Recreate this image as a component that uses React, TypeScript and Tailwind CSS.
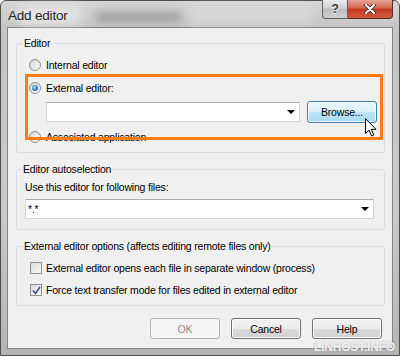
import React from 'react';

const Radio: React.FC<{ checked?: boolean }> = ({ checked }) => (
    <span className="w-[12px] h-[12px] rounded-full border border-[#8e8f8f] bg-[linear-gradient(135deg,#d4d4d4,#f9f9f9)] flex items-center justify-center shrink-0">
        {checked && <span className="w-[6px] h-[6px] rounded-full bg-[radial-gradient(circle_at_40%_35%,#9ddcff,#1b63a8_75%)]" />}
    </span>
);

const Check: React.FC<{ checked?: boolean }> = ({ checked }) => (
    <span className="w-[12px] h-[12px] border border-[#8e8f8f] bg-[linear-gradient(135deg,#d8d8d8,#fbfbfb)] flex items-center justify-center shrink-0">
        {checked && (
            <svg width="9" height="9" viewBox="0 0 9 9">
                <path d="M1 4.5 L3.5 7.5 L8 1" fill="none" stroke="#3d5183" strokeWidth="1.6" />
            </svg>
        )}
    </span>
);

const Arrow = () => <span className="w-0 h-0 border-l-[4px] border-r-[4px] border-t-[4px] border-l-transparent border-r-transparent border-t-black" />;

const DlgButton: React.FC<{ children: React.ReactNode, disabled?: boolean }> = ({ children, disabled }) => (
    <button
        className={disabled
            ? 'w-[70px] h-[21px] rounded-[3px] border border-[#b5b8ba] bg-[#f4f4f4] text-[#8b8b8b]'
            : 'w-[70px] h-[21px] rounded-[3px] border border-[#707070] bg-[linear-gradient(#f2f2f2,#ebebeb_50%,#dddddd_50%,#cfcfcf)] text-black shadow-[inset_0_0_0_1px_#fcfcfc]'}
    >
        {children}
    </button>
);

const Cursor = () => (
    <svg width="13" height="19" viewBox="0 0 13 19" className="absolute left-[365px] top-[118px]">
        <path d="M0.5 0.5 L0.5 15.5 L4 12.2 L6.6 18 L8.8 17 L6.3 11.3 L11 11.3 Z" fill="#fff" stroke="#000" strokeWidth="1" />
    </svg>
);

export default function App() {
    return (
        <div className="w-[400px] h-[356px] bg-white relative overflow-hidden font-['Liberation_Sans',sans-serif] text-[10.5px] tracking-[-0.2px] leading-[14px] text-black">
            {/* window frame */}
            <div className="relative w-[400px] h-[356px] rounded-t-[6px] border border-[#4e4e4e] bg-[linear-gradient(180deg,#d6d6d6,#c4c4c4_8%,#c9c9c9_60%,#b4b4b4)] pt-[26px] px-[6px] pb-[6px]">
                {/* glass blur behind title */}
                <div className="absolute left-[95px] top-[11px] w-[85px] h-[10px] bg-[#8c8c8c] blur-[4px] opacity-70" />
                <div className="absolute left-[190px] top-[6px] w-[120px] h-[16px] bg-[#dedede] blur-[6px] opacity-70" />
                <div className="absolute left-[20px] top-[4px] w-[60px] h-[20px] bg-[#e8e8e8] blur-[6px] opacity-80" />

                {/* title */}
                <div className="absolute left-[7px] top-[7px] text-[13.5px] tracking-[-0.2px] leading-[16px] text-[#1d1d1d] [text-shadow:0_0_6px_#fff]">Add editor</div>

                {/* caption buttons */}
                <div className="absolute right-[6px] top-[-1px] flex">
                    <div className="w-[26px] h-[19px] rounded-bl-[4px] border border-[#5f5f5f] border-t-0 bg-[linear-gradient(#eaeaea,#d2d2d2_45%,#bcbcbc_50%,#d0d0d0)] flex items-center justify-center text-[12px] font-bold text-[#3a3a3a] [text-shadow:0_1px_0_#fff]">?</div>
                    <div className="w-[45px] h-[19px] rounded-br-[4px] border border-l-0 border-[#5a2a22] border-t-0 bg-[linear-gradient(#e8a596,#d2664f_45%,#c2381f_50%,#d35a3f)] flex items-center justify-center">
                        <svg width="12" height="10" viewBox="0 0 12 10">
                            <path d="M2 1 L10 9 M10 1 L2 9" stroke="#3b1a14" strokeWidth="3.6" strokeLinecap="round" />
                            <path d="M2 1 L10 9 M10 1 L2 9" stroke="#fff" strokeWidth="2.2" strokeLinecap="round" />
                        </svg>
                    </div>
                </div>

                {/* client area */}
                <div className="h-full border border-[#848484] bg-[#f0f0f0] pl-[8px] pr-[7px] flex flex-col">
                    <fieldset className="mt-[9px] border border-[#d5dfe5] rounded-[3px] pb-[8px]">
                        <legend className="ml-[6px] px-[1px] leading-[12px]">Editor</legend>
                        <div className="pl-[12px] pr-[7px]">
                            <div className="mt-[9px] flex items-center gap-[5px] h-[14px]">
                                <Radio />
                                <span>Internal editor</span>
                            </div>
                            <div className="relative">
                                <div className="mt-[9px] flex items-center gap-[5px] h-[14px]">
                                    <Radio checked />
                                    <span>External editor:</span>
                                </div>
                                <div className="mt-[6px] flex items-center h-[22px] pl-[17px] gap-[7px]">
                                    <div className="w-[254px] h-[20px] bg-white border border-[#d0d3d8] border-t-[#abadb3] flex items-center justify-end pr-[4px]">
                                        <Arrow />
                                    </div>
                                    <button className="w-[70px] h-[22px] rounded-[3px] border border-[#3c7fb1] bg-[linear-gradient(#eaf6fd,#d9f0fc_50%,#bee6fd_50%,#a7d9f5)] shadow-[inset_0_0_0_1px_#f4fbff]">Browse...</button>
                                </div>
                                <div className="mt-[7px] flex items-center gap-[5px] h-[14px]">
                                    <Radio />
                                    <span>Associated application</span>
                                </div>
                                <div className="absolute left-[-4px] right-[-6px] top-[-7px] bottom-[4px] border-[3px] border-[#fb7d12]" />
                            </div>
                        </div>
                    </fieldset>

                    <fieldset className="mt-[10px] border border-[#d5dfe5] rounded-[3px] pb-[10px]">
                        <legend className="ml-[5px] px-[1px] leading-[12px]">Editor autoselection</legend>
                        <div className="pl-[8px] pr-[10px]">
                            <div className="mt-[5px] h-[14px]">Use this editor for following files:</div>
                            <div className="mt-[5px] h-[20px] bg-white border border-[#d0d3d8] border-t-[#abadb3] flex items-center justify-between pl-[2px] pr-[4px]">
                                <span>*.*</span>
                                <Arrow />
                            </div>
                        </div>
                    </fieldset>

                    <fieldset className="mt-[10px] border border-[#d5dfe5] rounded-[3px] pb-[8px]">
                        <legend className="ml-[6px] px-[1px] leading-[12px]">External editor options (affects editing remote files only)</legend>
                        <div className="pl-[13px] pr-[8px]">
                            <div className="mt-[9px] flex items-center gap-[4px] h-[14px]">
                                <Check />
                                <span>External editor opens each file in separate window (process)</span>
                            </div>
                            <div className="mt-[8px] flex items-center gap-[4px] h-[14px]">
                                <Check checked />
                                <span>Force text transfer mode for files edited in external editor</span>
                            </div>
                        </div>
                    </fieldset>

                    <div className="mt-[12px] flex justify-end gap-[11px] pr-[3px]">
                        <DlgButton disabled>OK</DlgButton>
                        <DlgButton>Cancel</DlgButton>
                        <DlgButton>Help</DlgButton>
                    </div>
                </div>

                <div className="absolute left-[313px] top-[340px] text-[12px] leading-[13px] font-bold text-white/80 [text-shadow:0_0_2px_#999]">LINHOST.INFO</div>
            </div>
            <Cursor />
        </div>
    );
}
